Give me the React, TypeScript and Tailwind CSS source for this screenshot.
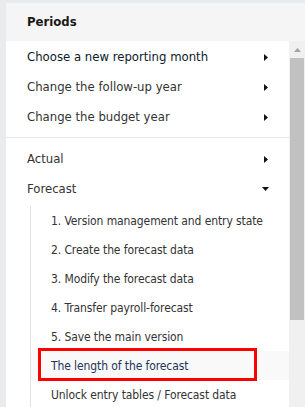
import React from 'react'

const topItems = [
  'Choose a new reporting month',
  'Change the follow-up year',
  'Change the budget year',
]

const forecastItems = [
  '1. Version management and entry state',
  '2. Create the forecast data',
  '3. Modify the forecast data',
  '4. Transfer payroll-forecast',
  '5. Save the main version',
  'The length of the forecast',
  'Unlock entry tables / Forecast data',
]

const ArrowRight = () => (
  <svg width="4" height="7" viewBox="0 0 4 7" className="shrink-0">
    <path d="M0 0 L4 3.5 L0 7 Z" fill="#111" />
  </svg>
)

const ArrowDown = () => (
  <svg width="7" height="4" viewBox="0 0 7 4" className="shrink-0">
    <path d="M0 0 L7 0 L3.5 4 Z" fill="#111" />
  </svg>
)

const MenuRow = ({
  label,
  open,
  dark,
}: {
  label: string
  open?: boolean
  dark?: boolean
}) => (
  <div className="h-[30px] flex items-center justify-between pl-[21px] pr-[21px]">
    <span className={dark ? 'text-[#0d1a2b]' : 'text-[#333]'}>{label}</span>
    {open ? (
      <span className="mr-[-1px]">
        <ArrowDown />
      </span>
    ) : (
      <ArrowRight />
    )}
  </div>
)

export default function App() {
  return (
    <div
      className="w-[305px] h-[407px] overflow-hidden bg-[#e9ebec] pl-[6px] pt-[3px] text-[13px]"
      style={{ fontFamily: '"DejaVu Sans Condensed", "DejaVu Sans", sans-serif' }}
    >
      <div className="flex flex-col h-full">
        <div className="h-[38px] shrink-0 bg-[#f5f5f5] pl-[21px] flex items-center font-bold text-[#1a1a1a]">
          Periods
        </div>
        <div className="flex flex-1 min-h-0">
          <div className="flex-1 bg-white pt-[1px]">
            {topItems.map((t, i) => (
              <MenuRow key={t} label={t} dark={i === 0} />
            ))}
            <div className="h-[5px]" />
            <div className="h-[1px] bg-[#e6e8ea]" />
            <div className="h-[6px]" />
            <MenuRow label="Actual" />
            <MenuRow label="Forecast" open />
            <div className="mt-[2px] ml-[24px] border-l border-[#dfe1e3] text-[12px] tracking-[-0.1px]">
              {forecastItems.map((t, i) =>
                i === 5 ? (
                  <div
                    key={t}
                    className="relative h-[29px] flex items-center pl-[20px] bg-[#f9f9f9] text-[#1d3557]"
                  >
                    {t}
                    <div className="absolute left-[7px] top-[-3px] w-[219px] h-[33px] border-[3px] border-[#ff0000]" />
                  </div>
                ) : (
                  <div key={t} className="h-[29px] flex items-center pl-[20px] text-[#333]">
                    {t}
                  </div>
                )
              )}
            </div>
          </div>
          <div className="w-[16px] shrink-0 bg-[#f0f0f0] flex flex-col items-center">
            <div className="h-[17px] w-full flex items-center justify-center">
              <svg width="7" height="4" viewBox="0 0 7 4">
                <path d="M3.5 0 L7 4 L0 4 Z" fill="#a3a3a3" />
              </svg>
            </div>
            <div className="w-[14px] h-[262px] bg-[#c1c1c1]" />
          </div>
        </div>
      </div>
    </div>
  )
}
